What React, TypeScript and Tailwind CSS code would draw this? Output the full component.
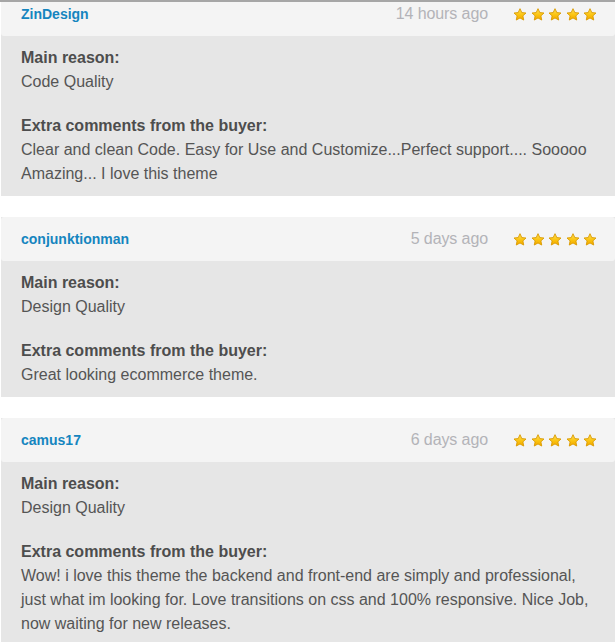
import React from "react";

type Review = {
  user: string;
  when: string;
  reason: string;
  comment: string[];
};

const reviews: Review[] = [
  {
    user: "ZinDesign",
    when: "14 hours ago",
    reason: "Code Quality",
    comment: [
      "Clear and clean Code. Easy for Use and Customize...Perfect support.... Sooooo",
      "Amazing... I love this theme",
    ],
  },
  {
    user: "conjunktionman",
    when: "5 days ago",
    reason: "Design Quality",
    comment: ["Great looking ecommerce theme."],
  },
  {
    user: "camus17",
    when: "6 days ago",
    reason: "Design Quality",
    comment: [
      "Wow! i love this theme the backend and front-end are simply and professional,",
      "just what im looking for. Love transitions on css and 100% responsive. Nice Job,",
      "now waiting for new releases.",
    ],
  },
];

function Star({ id }: { id: string }) {
  return (
    <svg width="14" height="13" viewBox="0 0 24 23" className="block">
      <defs>
        <linearGradient id={id} x1="0" y1="0" x2="0" y2="1">
          <stop offset="0%" stopColor="#ffe25a" />
          <stop offset="55%" stopColor="#fbc30f" />
          <stop offset="100%" stopColor="#f2a800" />
        </linearGradient>
      </defs>
      <path
        d="M12 1.2l3.2 6.9 7.4.8-5.5 5 1.5 7.4L12 17.6l-6.6 3.7 1.5-7.4-5.5-5 7.4-.8z"
        fill={`url(#${id})`}
        stroke="#d99a00"
        strokeWidth="1.6"
        strokeLinejoin="round"
      />
    </svg>
  );
}

function Stars({ k }: { k: number }) {
  return (
    <div className="flex items-center gap-[3.5px]">
      {[0, 1, 2, 3, 4].map((i) => (
        <Star key={i} id={`star-${k}-${i}`} />
      ))}
    </div>
  );
}

function ReviewCard({ r, k }: { r: Review; k: number }) {
  return (
    <div className="ml-px bg-[#e6e6e6]">
      <div className="flex h-[44px] items-center justify-between rounded-[3px] bg-[#f4f4f4] pl-5 pr-[18px]">
        <span className="text-[14px] font-bold text-[#1585bf]">{r.user}</span>
        <div className="flex items-center gap-[25px]">
          <span className="text-[16px] tracking-[-0.1px] text-[#b3b3b8]">{r.when}</span>
          <Stars k={k} />
        </div>
      </div>
      <div className="pb-[10px] pl-5 pr-2 pt-[10px] text-[16px] leading-[24px] text-[#555]">
        <p className="font-bold text-[#4d4d4d]">Main reason:</p>
        <p>{r.reason}</p>
        <p className="mt-5 font-bold text-[#4d4d4d]">Extra comments from the buyer:</p>
        <p className="whitespace-nowrap">
          {r.comment.map((line, i) => (
            <React.Fragment key={i}>
              {i > 0 && <br />}
              {line}
            </React.Fragment>
          ))}
        </p>
      </div>
    </div>
  );
}

export default function App() {
  return (
    <div
      className="h-[642px] w-[615px] overflow-hidden border-t-2 border-[#a6a6a6] bg-white"
      style={{ fontFamily: '"Liberation Sans", Arial, sans-serif' }}
    >
      <div className="-mt-[10px] flex flex-col gap-[21px]">
        {reviews.map((r, i) => (
          <ReviewCard key={r.user} r={r} k={i} />
        ))}
      </div>
    </div>
  );
}
